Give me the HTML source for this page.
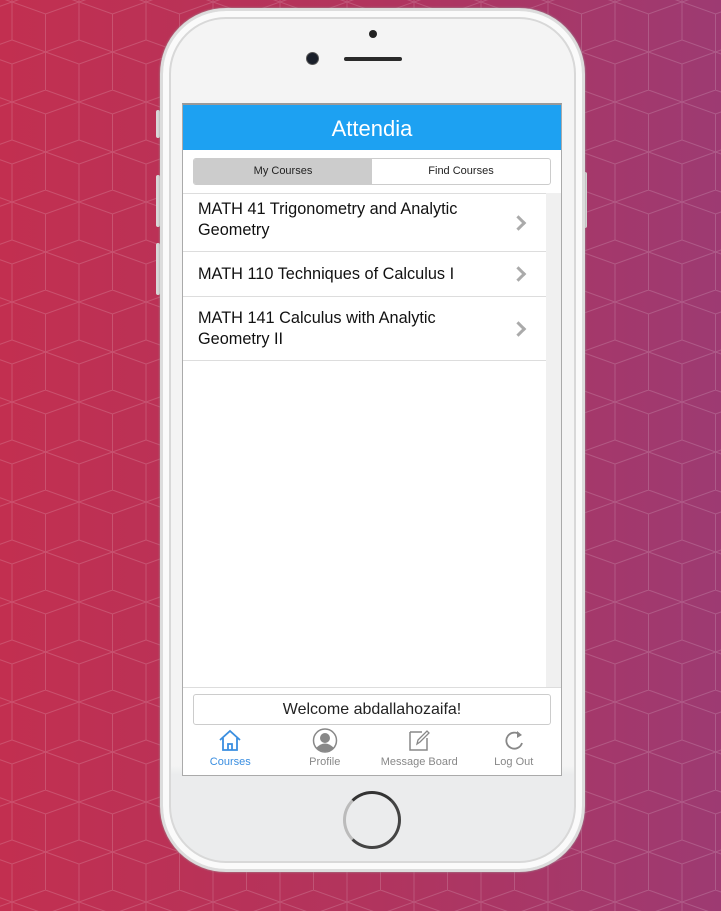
<!DOCTYPE html>
<html><head><style>
*{margin:0;padding:0;box-sizing:border-box}
body{width:721px;height:911px;overflow:hidden;font-family:"Liberation Sans",Arial,sans-serif;background:linear-gradient(90deg,#c22f50,#b2345d 50%,#9d3a72);position:relative}
.pat{position:absolute;left:0;top:0}
.phone{position:absolute;left:160px;top:8px;width:425px;height:864px;border-radius:66px;background:linear-gradient(#f4f4f4 0,#f4f4f4 88%,#ebeced 89%);border:3px solid #dcdcdc;box-shadow:inset 0 0 0 6px #fafafa,inset 0 0 0 8px #d8d8d8,0 0 2px #999}
.btn{position:absolute;background:#d9d9d9;width:4px;border-radius:2px}
.screen{position:absolute;left:182px;top:103px;width:380px;height:673px;background:#fff;border:1px solid #aaa;border-top:2px solid #999}
.hdr{height:45px;background:#1da1f2;color:#fff;font-size:22px;text-align:center;line-height:47px}
.seg{position:absolute;left:10px;top:53px;width:358px;height:27px;border:1px solid #ccc;border-radius:3px;display:flex;font-size:11px;overflow:hidden}
.seg div{flex:1;text-align:center;line-height:25px;color:#222}
.list{position:absolute;left:0;top:88px;width:363px;height:494px;border-top:1px solid #ddd}
.sb{position:absolute;left:363px;top:88px;width:15px;height:494px;background:#f0f0f0}
.row{border-bottom:1px solid #ddd;padding:0 15px;font-size:16.3px;color:#111;line-height:21px;position:relative;display:flex;align-items:center}
.row:after{content:"";position:absolute;right:22px;top:50%;width:8px;height:8px;border-top:3px solid #aaa;border-right:3px solid #aaa;transform:translateY(-50%) rotate(45deg)}
.wel{position:absolute;left:10px;top:589px;width:358px;height:31px;border:1px solid #ccc;border-radius:3px;text-align:center;line-height:29px;font-size:16px;color:#222}
.tabs{position:absolute;left:0;top:623px;width:378px;display:flex;font-size:11px;color:#888}
.tabs div{flex:1;text-align:center}
.tabs svg{display:block;margin:0 auto 3px;height:25px}
</style></head><body>
<svg class="pat" width="721" height="911"><defs><pattern id="p" x="12" y="-10" width="67" height="100" patternUnits="userSpaceOnUse"><path d="M0 12L33.5 0L67 12L33.5 24L0 12M0 12V50L33.5 62L67 50V12M33.5 24V62M33.5 62L0 74M33.5 62L67 74M0 74V100M67 74V100M0 0V12M67 0V12M33.5 62V100" stroke="rgba(255,255,255,0.16)" stroke-width="1" fill="none"/></pattern></defs><rect width="721" height="911" fill="url(#p)"/></svg>
<div class="btn" style="left:156px;top:110px;height:28px"></div>
<div class="btn" style="left:156px;top:175px;height:52px"></div>
<div class="btn" style="left:156px;top:243px;height:52px"></div>
<div class="btn" style="left:583px;top:172px;height:56px"></div>
<div class="phone"></div>
<div style="position:absolute;left:369px;top:30px;width:8px;height:8px;border-radius:50%;background:#222"></div>
<div style="position:absolute;left:306px;top:52px;width:13px;height:13px;border-radius:50%;background:#1a1f2a;border:1px solid #555"></div>
<div style="position:absolute;left:344px;top:57px;width:58px;height:4px;border-radius:2px;background:#2a2a2a"></div>
<div style="position:absolute;left:343px;top:791px;width:58px;height:58px;border-radius:50%;border:3px solid #444;border-left-color:#bbb;border-top-color:#333;background:#ebeced"></div>
<div class="screen">
<div class="hdr">Attendia</div>
<div class="seg"><div style="background:#ccc">My Courses</div><div>Find Courses</div></div>
<div class="list">
<div class="row" style="height:58px;align-items:flex-start;padding-top:5px">MATH 41 Trigonometry and Analytic<br>Geometry</div>
<div class="row" style="height:45px">MATH 110 Techniques of Calculus I</div>
<div class="row" style="height:64px">MATH 141 Calculus with Analytic<br>Geometry II</div>
</div>
<div class="sb"></div>
<div style="position:absolute;left:0;top:582px;width:378px;border-top:1px solid #ddd"></div>
<div class="wel">Welcome abdallahozaifa!</div>
<div class="tabs">
<div style="color:#3a8ee0"><svg viewBox="0 0 26 25" width="26"><path d="M3 12L13 3L23 12M6 10V22H20V10M11 22V16H15V22" fill="none" stroke="#3a8ee0" stroke-width="1.8"/></svg>Courses</div>
<div><svg viewBox="0 0 26 25" width="26"><circle cx="13" cy="12.5" r="11.5" fill="none" stroke="#888" stroke-width="1.5"/><circle cx="13" cy="10" r="5" fill="#888"/><path d="M4 20Q13 11 22 20Q13 27 4 20Z" fill="#888"/></svg>Profile</div>
<div><svg viewBox="0 0 26 25" width="26"><path d="M4 4H16M4 4V22H21V10" fill="none" stroke="#888" stroke-width="1.5"/><path d="M11 16L12 12L21 3L23 5L14 14Z" fill="none" stroke="#888" stroke-width="1.3"/></svg>Message Board</div>
<div><svg viewBox="0 0 26 25" width="26"><path d="M19 7A8 8 0 1 0 21 15" fill="none" stroke="#888" stroke-width="1.8"/><path d="M16 3L21 7L16 10Z" fill="#888"/></svg>Log Out</div>
</div>
</div>
</body></html>
